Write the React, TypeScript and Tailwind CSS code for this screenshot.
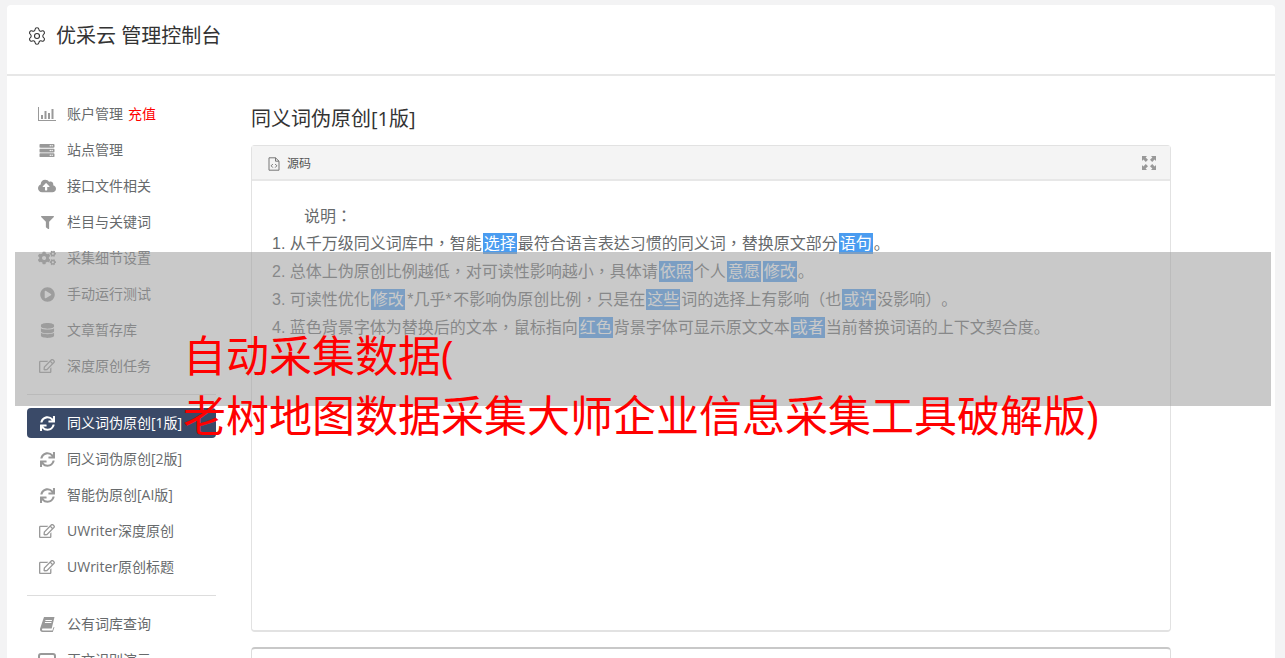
import { FaCloudUploadAlt, FaFilter, FaCogs, FaPlayCircle, FaDatabase, FaRegEdit, FaSync, FaServer } from "react-icons/fa"
import { Settings } from "lucide-react"
import type { ReactNode } from "react"

const sans = "font-['Open_Sans','Noto_Sans_CJK_SC',sans-serif]"
const body = "font-['Liberation_Sans','Noto_Sans_CJK_TC',sans-serif]"

function SourceIcon() {
  return (
    <svg viewBox="0 0 12 14" className="h-[14px] w-[12px] text-[#777]" fill="none" stroke="currentColor">
      <path d="M1 .8h6.5L11 4.200v9H1z" strokeWidth="1" />
      <path d="M7.500 .8v3.400H11" strokeWidth="1" />
      <path d="M4.800 7 3.200 8.800l1.600 1.800M7.200 7l1.600 1.800-1.600 1.800" strokeWidth="1" />
    </svg>
  )
}

function ExpandIcon() {
  return (
    <svg viewBox="0 0 14 14" className="h-[14px] w-[14px]" fill="#999">
      <path d="M0 0h5L3.600 1.400 6 3.800 3.800 6 1.400 3.600 0 5zM14 0v5l-1.400-1.400L10.200 6 8 3.800l2.400-2.400L9 0zM0 14V9l1.400 1.400L3.800 8 6 10.200l-2.400 2.400L5 14zM14 14H9l1.400-1.400L8 10.200 10.200 8l2.400 2.400L14 9z" />
    </svg>
  )
}

function ChartIcon() {
  return (
    <svg viewBox="0 0 18 14" className="h-[14px] w-[18px]" fill="#999">
      <path d="M0 0h1v13h17v1H0z" />
      <path d="M3 8h2v4H3zM6.500 4h2v8h-2zM10 6h2v6h-2zM13.500 2h2v10h-2z" />
    </svg>
  )
}

function BookIcon() {
  return (
    <svg viewBox="0 0 15 15" className="h-[15px] w-[15px]" fill="#999">
      <path d="M4 0h10.500l-2.800 11.500H3c-.8 0-1 .5-1 1s.4 1 1 1h9.500l.8-3 1.200-.5L12.800 15H2.500C1 15 0 13.800 0 12.500c0-.4 0-.7.100-1z" />
      <path d="M5.500 3h6.500l-.2 1H5.300zM5 5h6.500l-.2 1H4.800z" fill="#fff" />
    </svg>
  )
}

function SquareIcon() {
  return <span className="block h-[15px] w-[18px] rounded-[3px] border-2 border-[#999]" />
}

type Item = { icon: ReactNode; label: string; extra?: string; active?: boolean }

const groupA: Item[] = [
  { icon: <ChartIcon />, label: "账户管理", extra: "充值" },
  { icon: <FaServer className="h-[15px] w-[16px]" />, label: "站点管理" },
  { icon: <FaCloudUploadAlt className="h-[18px] w-[18px]" />, label: "接口文件相关" },
  { icon: <FaFilter className="h-[13px] w-[13px]" />, label: "栏目与关键词" },
  { icon: <FaCogs className="h-[18px] w-[18px]" />, label: "采集细节设置" },
  { icon: <FaPlayCircle className="h-[15px] w-[15px]" />, label: "手动运行测试" },
  { icon: <FaDatabase className="h-[15px] w-[15px]" />, label: "文章暂存库" },
  { icon: <FaRegEdit className="h-[16px] w-[16px]" />, label: "深度原创任务" },
]

const groupB: Item[] = [
  { icon: <FaSync className="h-[15px] w-[15px]" />, label: "同义词伪原创[1版]", active: true },
  { icon: <FaSync className="h-[15px] w-[15px]" />, label: "同义词伪原创[2版]" },
  { icon: <FaSync className="h-[15px] w-[15px]" />, label: "智能伪原创[AI版]" },
  { icon: <FaRegEdit className="h-[16px] w-[16px]" />, label: "UWriter深度原创" },
  { icon: <FaRegEdit className="h-[16px] w-[16px]" />, label: "UWriter原创标题" },
]

const groupC: Item[] = [
  { icon: <BookIcon />, label: "公有词库查询" },
  { icon: <SquareIcon />, label: "正文识别演示" },
]

function NavItem({ item }: { item: Item }) {
  return (
    <a className={`flex h-[30px] items-center rounded px-[10px] text-[14px] ${item.active ? "bg-[#3a4a68] text-white" : "text-[#676a6c]"}`}>
      <span className={`flex w-[20px] justify-center ${item.active ? "text-white" : "text-[#999]"}`}>{item.icon}</span>
      <span className="ml-[10px] whitespace-nowrap pb-[2px]">{item.label}</span>
      {item.extra && <span className="ml-[5px] pb-[2px] text-[#ff0000]">{item.extra}</span>}
    </a>
  )
}

function Hl({ children }: { children: ReactNode }) {
  return <span className="mx-px inline-block h-[21px] bg-[#4a9cf0] px-px leading-[21px] text-white">{children}</span>
}

// full stop sits low in the box, unlike the centered commas
function Stop() {
  return <span className="inline-block h-[21px] font-['Noto_Sans_CJK_SC',sans-serif] leading-[21px]">。</span>
}

export default function App() {
  return (
    <div className={`relative h-[658px] overflow-hidden bg-[#f3f3f4] pl-[7px] pr-[10px] pt-[5px] ${sans}`}>
      <div className="h-[700px] rounded-t bg-white">
        <header className="flex h-[71px] items-center border-b-2 border-[#e7e7e7] pb-[7px] pl-[20px] text-[#333]">
          <Settings className="h-[20px] w-[20px]" strokeWidth={1.3} />
          <span className="ml-[9px] text-[20px]">优采云 管理控制台</span>
        </header>
        <div className="flex">
          <aside className="ml-[20px] w-[189px] shrink-0 pt-[23px]">
            <nav className="flex flex-col gap-[6px]">
              {groupA.map((item) => <NavItem key={item.label} item={item} />)}
            </nav>
            <div className="my-[13px] border-t border-[#ddd]" />
            <nav className="flex flex-col gap-[6px]">
              {groupB.map((item) => <NavItem key={item.label} item={item} />)}
            </nav>
            <div className="my-[13px] border-t border-[#ddd]" />
            <nav className="flex flex-col gap-[6px]">
              {groupC.map((item) => <NavItem key={item.label} item={item} />)}
            </nav>
          </aside>
          <main className="ml-[35px] w-[920px] pt-[29px]">
            <h2 className="text-[20px] leading-[28px] text-[#333]">同义词伪原创[1版]</h2>
            <section className="mt-[12px] h-[487px] rounded border border-b-2 border-[#e2e2e2]">
              <div className="flex h-[35px] items-center justify-between border-b-2 border-[#e7e7e7] bg-[#f4f4f4] pl-[16px] pr-[14px]">
                <div className="flex items-center gap-[7px] pt-[2px] text-[12px] text-[#555]">
                  <SourceIcon />
                  <span>源码</span>
                </div>
                <ExpandIcon />
              </div>
              <div className={`px-[20px] pt-[22px] text-[16px] leading-[28px] text-[#676a6c] ${body}`}>
                <p className="h-[27px] pl-[32px]">说明：</p>
                <p className="h-[28px]">1. 从千万级同义词库中，智能<Hl>选择</Hl>最符合语言表达习惯的同义词，替换原文部分<Hl>语句</Hl><Stop /></p>
                <p className="h-[28px]">2. 总体上伪原创比例越低，对可读性影响越小，具体请<Hl>依照</Hl>个人<Hl>意愿</Hl><Hl>修改</Hl><Stop /></p>
                <p className="h-[28px]">3. 可读性优化<Hl>修改</Hl><span className="px-[1.5px]">*几乎*</span>不影响伪原创比例，只是在<Hl>这些</Hl>词的选择上有影响（也<Hl>或许</Hl>没影响）<Stop /></p>
                <p className="h-[28px]">4. 蓝色背景字体为替换后的文本，鼠标指向<Hl>红色</Hl>背景字体可显示原文文本<Hl>或者</Hl>当前替换词语的上下文契合度<Stop /></p>
              </div>
            </section>
            <section className="mt-[15px] h-[60px] rounded border border-t-2 border-[#ddd] border-t-[#c8c8c8]" />
          </main>
        </div>
      </div>
      {/* banner over the page */}
      <div className="absolute left-[15px] top-[252px] h-[154px] w-[1256px] bg-[rgba(160,160,160,0.57)]" />
      <h1 className="absolute left-[183px] top-[326px] w-[960px] text-[43px] leading-[60px] text-[#ff0000]">
        自动采集数据(<br />老树地图数据采集大师企业信息采集工具破解版)
      </h1>
    </div>
  )
}
